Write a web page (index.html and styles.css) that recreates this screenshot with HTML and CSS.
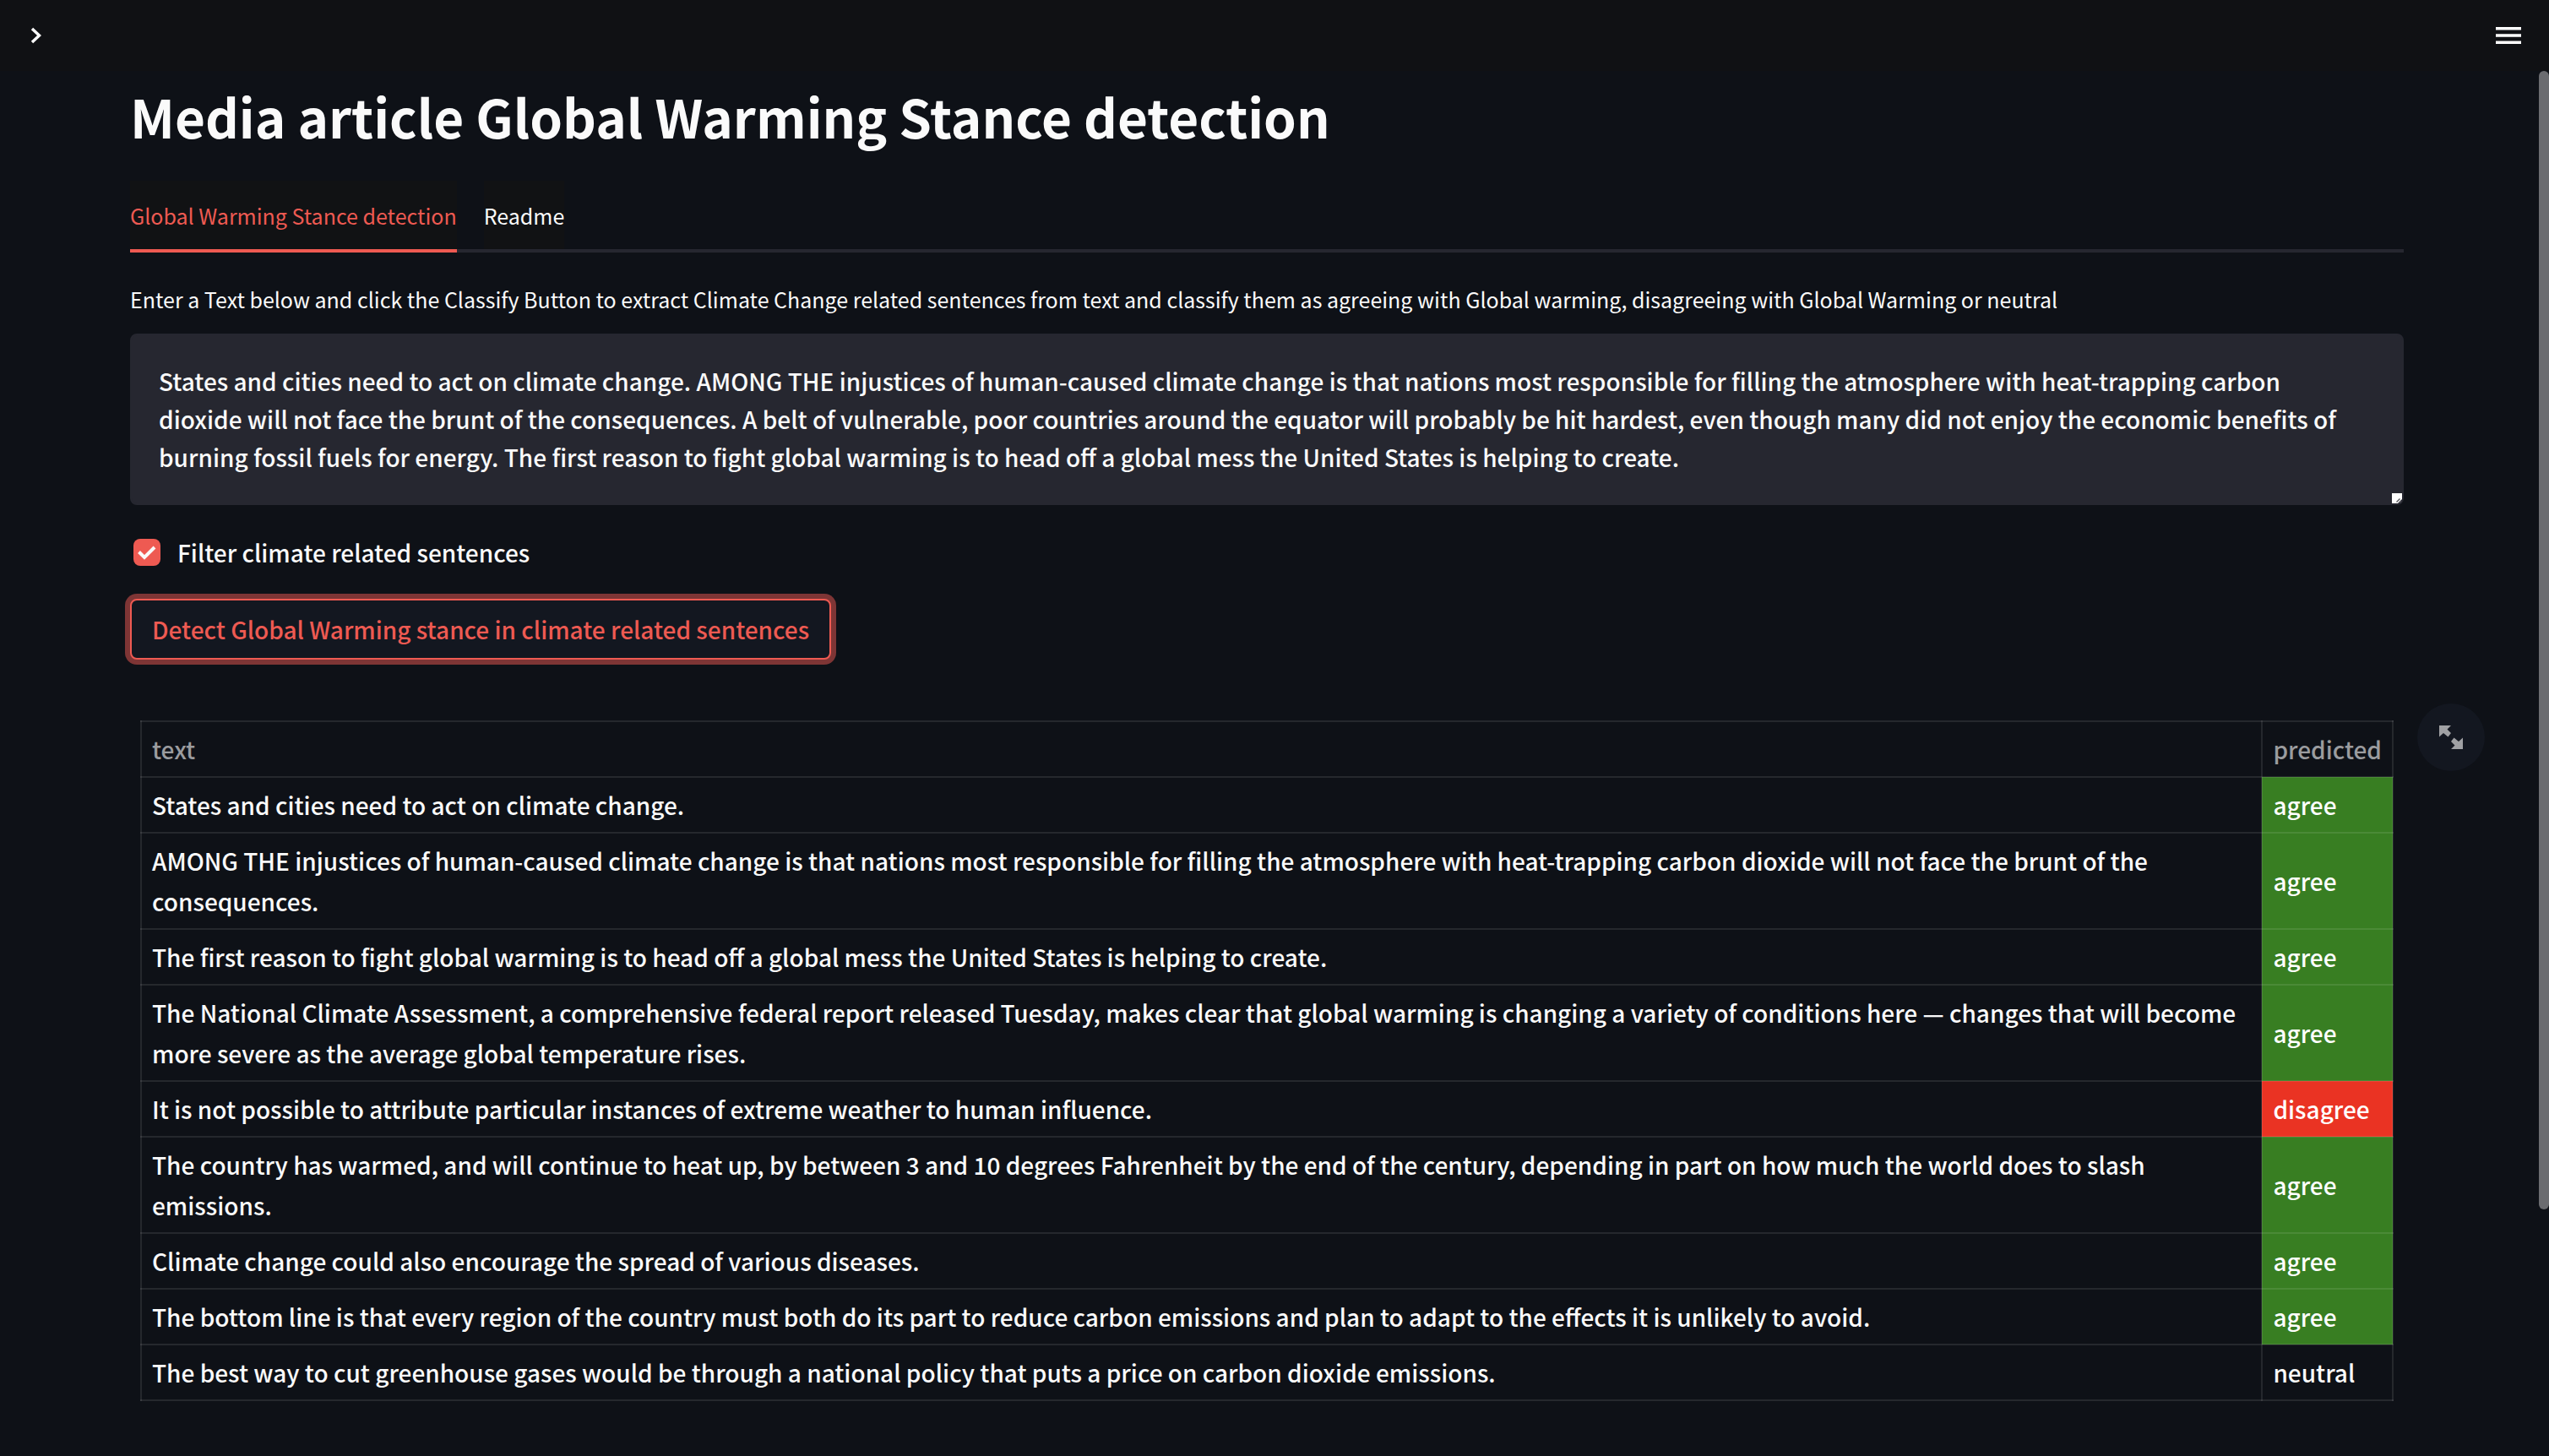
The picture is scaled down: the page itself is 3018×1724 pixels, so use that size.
FILE: index.html
```
<!DOCTYPE html>
<html lang="en">
<head>
<meta charset="utf-8">
<title>Media article Global Warming Stance detection</title>
<link rel="stylesheet" href="styles.css">
</head>
<body>
<header class="toolbar">
  <button class="icon-button" type="button" aria-label="Open sidebar">
    <svg class="chevron" viewBox="0 0 14 20"><path d="M2 2l8.500 8L2 18" fill="none" stroke="currentColor" stroke-width="3.400"/></svg>
  </button>
  <button class="icon-button" type="button" aria-label="Main menu">
    <svg class="menu-icon" viewBox="0 0 30 20"><path d="M0 0h30v3.400H0zM0 8.300h30v3.400H0zM0 16.600h30V20H0z" fill="currentColor"/></svg>
  </button>
</header>
<main class="content">
  <h1 class="title">Media article Global Warming Stance detection</h1>
  <nav class="tabs" role="tablist">
    <button class="tab tab-active" type="button" role="tab" aria-selected="true">Global Warming Stance detection</button>
    <button class="tab" type="button" role="tab" aria-selected="false">Readme</button>
  </nav>
  <label class="field-label" for="article">Enter a Text below and click the Classify Button to extract Climate Change related sentences from text and classify them as agreeing with Global warming, disagreeing with Global Warming or neutral</label>
  <div class="field">
    <textarea class="textarea" id="article" rows="3" spellcheck="false">States and cities need to act on climate change. AMONG THE injustices of human-caused climate change is that nations most responsible for filling the atmosphere with heat-trapping carbon dioxide will not face the brunt of the consequences. A belt of vulnerable, poor countries around the equator will probably be hit hardest, even though many did not enjoy the economic benefits of burning fossil fuels for energy. The first reason to fight global warming is to head off a global mess the United States is helping to create.</textarea>
    <svg class="grip" viewBox="0 0 12 12"><path d="M0 0h12v7l-5 5H0z" fill="#fff"/><path d="M5.500 10.500l4-4M9 11l2-2" stroke="#55565b" stroke-width="1.400"/></svg>
  </div>
  <label class="check"><input class="check-box" type="checkbox" checked><span>Filter climate related sentences</span></label>
  <button class="detect" type="button">Detect Global Warming stance in climate related sentences</button>
  <section class="results">
    <button class="expand" type="button" aria-label="View fullscreen">
      <svg class="expand-icon" viewBox="0 0 28 28"><path d="M0 0h14L9.500 4.500l4.500 4.500-3.500 4.500L5 9 0 13.500zM28 28H14l4.500-4.500L14 19l3.500-4.500L23 19l5-4.500z" fill="currentColor"/></svg>
    </button>
    <table class="table">
      <thead><tr><th scope="col">text</th><th class="predicted" scope="col">predicted</th></tr></thead>
      <tbody>
        <tr><td>States and cities need to act on climate change.</td><td class="agree">agree</td></tr>
        <tr><td>AMONG THE injustices of human-caused climate change is that nations most responsible for filling the atmosphere with heat-trapping carbon dioxide will not face the brunt of the consequences.</td><td class="agree">agree</td></tr>
        <tr><td>The first reason to fight global warming is to head off a global mess the United States is helping to create.</td><td class="agree">agree</td></tr>
        <tr><td>The National Climate Assessment, a comprehensive federal report released Tuesday, makes clear that global warming is changing a variety of conditions here — changes that will become more severe as the average global temperature rises.</td><td class="agree">agree</td></tr>
        <tr><td>It is not possible to attribute particular instances of extreme weather to human influence.</td><td class="disagree">disagree</td></tr>
        <tr><td>The country has warmed, and will continue to heat up, by between 3 and 10 degrees Fahrenheit by the end of the century, depending in part on how much the world does to slash emissions.</td><td class="agree">agree</td></tr>
        <tr><td>Climate change could also encourage the spread of various diseases.</td><td class="agree">agree</td></tr>
        <tr><td>The bottom line is that every region of the country must both do its part to reduce carbon emissions and plan to adapt to the effects it is unlikely to avoid.</td><td class="agree">agree</td></tr>
        <tr><td>The best way to cut greenhouse gases would be through a national policy that puts a price on carbon dioxide emissions.</td><td>neutral</td></tr>
      </tbody>
    </table>
  </section>
</main>
<div class="scroll-thumb"></div>
</body>
</html>
```
FILE: styles.css
```
* { box-sizing: border-box; }

body {
  margin: 0;
  min-height: 100vh;
  overflow: hidden;
  background: #0e1117;
  color: #fafafa;
  font-family: "Noto Sans CJK SC", "Noto Sans", sans-serif;
  font-size: 28px;
  font-weight: 500;
  line-height: 48px;
}

button, textarea { font: inherit; color: inherit; }

.toolbar {
  display: flex;
  align-items: center;
  justify-content: space-between;
  height: 84px;
  padding: 0 33px 0 36px;
  background: #101114;
}

.icon-button {
  display: flex;
  padding: 0;
  border: 0;
  background: none;
  color: #fff;
}
.chevron { width: 14px; height: 20px; }
.menu-icon { width: 30px; height: 20px; }

.content {
  display: flex;
  flex-direction: column;
  align-items: flex-start;
  padding: 0 172px 0 154px;
}

.title {
  margin: 10px 0 34px;
  font-size: 62px;
  font-weight: 700;
  line-height: 86px;
}

.tabs {
  display: flex;
  align-self: stretch;
  gap: 32px;
  height: 85px;
  background: linear-gradient(#262730, #262730) bottom / 100% 4px no-repeat;
}
.tab {
  padding: 0;
  border: 0;
  border-bottom: 4px solid transparent;
  background: #111214 padding-box;
  font-size: 25px;
  font-weight: 400;
  line-height: 40px;
}
.tab-active { color: #ee5a52; border-color: #ee5a52; }

.field-label {
  margin-top: 35px;
  font-size: 25px;
  font-weight: 400;
  line-height: 40px;
}

.field {
  position: relative;
  align-self: stretch;
  margin-top: 21px;
}
.textarea {
  display: block;
  width: 100%;
  padding: 32px 48px 32px 32px;
  border: 2px solid #262730;
  border-radius: 8px;
  outline: 0;
  resize: none;
  overflow: hidden;
  background: #262730;
  line-height: 45px;
}
.grip {
  position: absolute;
  right: 2px;
  bottom: 2px;
  width: 12px;
  height: 12px;
}

.check {
  display: flex;
  align-items: center;
  gap: 20px;
  margin: 32px 0 0 4px;
}
.check-box {
  appearance: none;
  width: 32px;
  height: 32px;
  margin: 0;
  border-radius: 8px;
  background: #ee5a52 url("data:image/svg+xml,%3Csvg xmlns='http://www.w3.org/2000/svg' viewBox='0 0 32 32'%3E%3Cpath d='M6.500 15.500l6.500 6.500L25 10' fill='none' stroke='%23fafafa' stroke-width='4'/%3E%3C/svg%3E") center / 100% 100%;
}

.detect {
  margin-top: 31px;
  padding: 10px 24px;
  border: 2px solid #ee5a52;
  border-radius: 8px;
  background: #131720;
  color: #ee5a52;
  box-shadow: 0 0 0 6px #7e3535;
}

.results {
  position: relative;
  align-self: stretch;
  margin-top: 72px;
  padding: 0 12px;
}
.expand {
  position: absolute;
  top: -20px;
  right: -96px;
  display: grid;
  place-items: center;
  width: 80px;
  height: 80px;
  padding: 0;
  border: 0;
  border-radius: 50%;
  background: #131720;
  color: #a0a1a4;
}
.expand-icon { width: 28px; height: 28px; }

.table {
  width: 100%;
  border-collapse: collapse;
}
.table th, .table td {
  padding: 8px 12px;
  border: 2px solid rgba(250, 250, 250, 0.1);
  text-align: left;
  vertical-align: middle;
}
.table th { color: #9b9c9f; font-weight: 500; }
.predicted { width: 154px; }
.agree { background: #387e22; color: #fff; }
.disagree { background: #ea3323; color: #fff; }

.scroll-thumb {
  position: absolute;
  top: 84px;
  right: 0;
  width: 12px;
  height: 1348px;
  border-radius: 6px;
  background: #6b6c70;
}
```
